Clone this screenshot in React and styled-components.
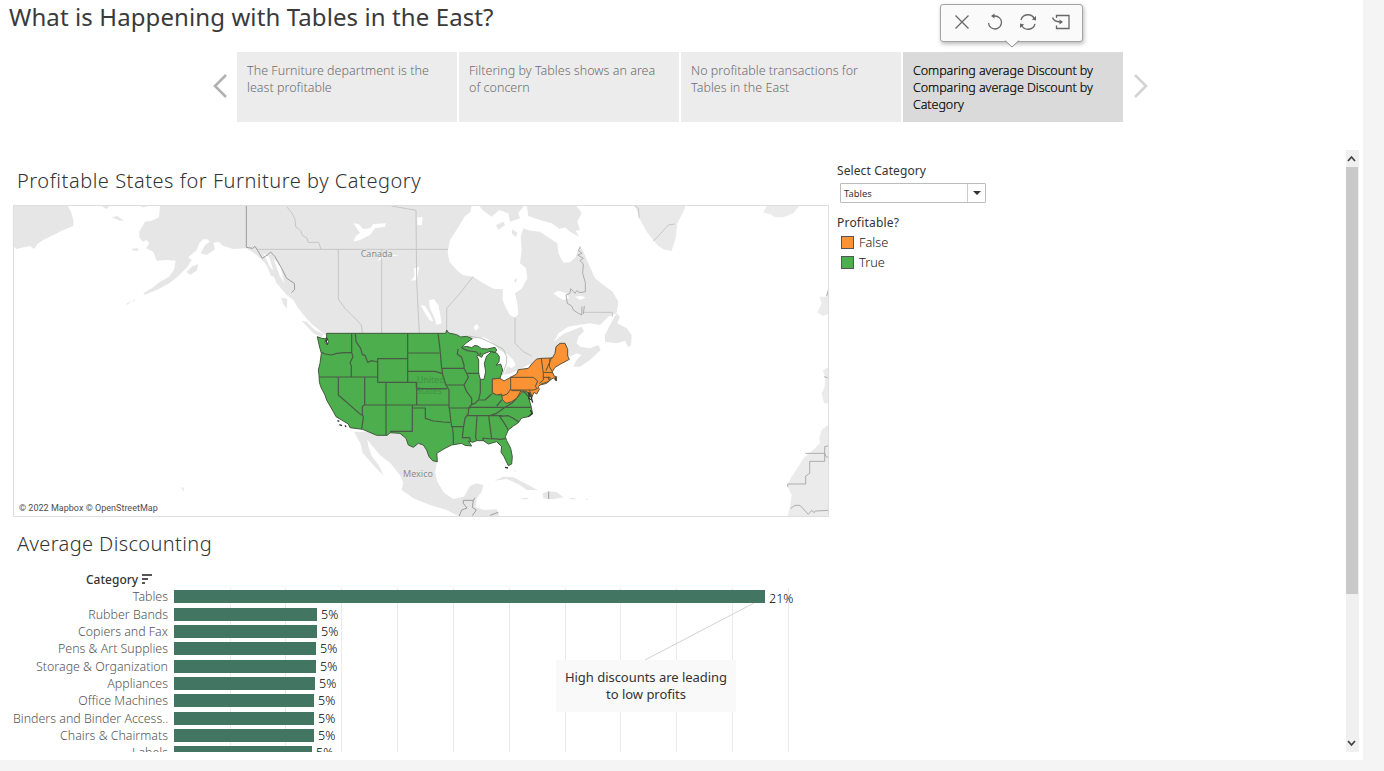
import React from 'react';
import styled, { createGlobalStyle } from 'styled-components';

const Global = createGlobalStyle`
  *, *::before, *::after { box-sizing: border-box; }
  body { margin: 0; background: #f4f4f4; font-family: "Noto Sans", "Open Sans", sans-serif; color: #333; overflow: hidden; }
`;

const Page = styled.main`
  width: 1363px; height: 760px; background: #fff;
  display: flex; flex-direction: column;
`;
const StoryTitle = styled.h1`
  margin: 0 0 19px; padding-left: 9px; height: 33px;
  font-size: 24px; font-weight: 400; line-height: 33px; letter-spacing: 0.1px; color: #3a3a3a;
`;
const Navigator = styled.nav`
  display: flex; align-items: center; height: 70px; padding-left: 212px; margin-bottom: 28px;
`;
const NavArrow = styled.button`
  width: 25px; height: 70px; padding: 0 0 2px; border: 0; background: none;
  display: flex; align-items: center;
  svg { display: block; fill: none; stroke: ${p => (p.$faded ? '#d3d3d3' : '#b1b1b1')}; stroke-width: 2.6; }
`;
const Points = styled.div`display: flex; gap: 2px; margin-right: 9px;`;
const Point = styled.div`
  position: relative; width: 220px; height: 70px; padding: 10px;
  background: ${p => (p.$active ? '#dadada' : '#ececec')};
  color: ${p => (p.$active ? '#000' : '#6c6c6c')};
  font-size: 12.5px; font-weight: 300;
  line-height: 17px; letter-spacing: ${p => (p.$active ? -0.06 : 0.02)}px;
  ${p => p.$active && '-webkit-text-stroke: 0.2px #000;'}
`;
const Caption = styled.span`display: block; width: 192px;`;
const Toolbar = styled.div`
  position: absolute; left: 37px; top: -48px; width: 143px; height: 38px;
  border: 1.5px solid #a3a3a3; border-radius: 3px; background: #fafafa;
  box-shadow: 1px 2px 4px rgba(0,0,0,.28);
  display: flex; align-items: center; justify-content: center; gap: 15px; padding-bottom: 3px;
`;
const ToolIcon = styled.svg`
  width: 18px; height: 18px; fill: none; stroke: #686868; stroke-width: 1.3; overflow: visible;
  .head { fill: #686868; stroke: none; }
`;
const Pointer = styled.svg`position: absolute; left: 63px; top: 34px; overflow: visible;`;

const Viewport = styled.div`
  display: flex; height: 602px; overflow: hidden; padding-left: 13px;
`;
const Sheets = styled.section`width: 824px; flex: none;`;
const SheetTitle = styled.h2`
  margin: 0; padding: ${p => p.$top}px 0 0 4px; height: ${p => p.$height}px;
  font-size: 20px; line-height: 27px; font-weight: 300; letter-spacing: ${p => p.$tracking}px; color: #333;
`;
const MapFrame = styled.div`
  position: relative; width: 816px; height: 312px; border: 1px solid #dedede; overflow: hidden; background: #fff;
  svg { display: block; margin: -1px; }
`;
const Credit = styled.div`
  position: absolute; left: 5px; bottom: 2px; font: 9px/12px Roboto, sans-serif; color: #4d4d4d; letter-spacing: 0.02px;
`;

const Chart = styled.div`position: relative; width: 816px;`;
const ChartHead = styled.div`
  display: flex; align-items: flex-start; gap: 4px; height: 17px; padding: 1px 0 0 73px;
  font-size: 12px; line-height: 16px; font-weight: 500; color: #333;
  svg { margin-top: -1px; }
`;
const Plot = styled.div`display: grid; grid-template-columns: 155px 6px 1fr; height: 182px;`;
const Gridlines = styled.div`
  grid-area: 1 / 3; display: grid; grid-template-columns: repeat(11, 55.83px); padding-left: 0.8px;
`;
const Gridline = styled.i`border-right: 1px solid #ebebeb;`;
const Rows = styled.div`grid-area: 1 / 1 / 2 / 4; display: flex; flex-direction: column; padding-top: 0.2px;`;
const BarRow = styled.div`
  height: 17.33px; flex: none; display: grid; grid-template-columns: 155px 1fr; column-gap: 6px; align-items: center;
`;
const BarLabel = styled.span`
  text-align: right; white-space: nowrap; font-size: 12.4px; line-height: 17px; font-weight: 300; color: #555;
`;
const BarTrack = styled.div`display: flex; align-items: center; gap: 4px; height: 17px;`;
const Bar = styled.div`height: 13px; background: #437563;`;
const Value = styled.span`
  font-size: 12.5px; line-height: 17px; font-weight: 300; color: #000;
  ${p => p.$drop && 'margin-bottom: -3px;'}
`;
const Leader = styled.svg`position: absolute; left: 632px; top: 32px;`;
const Annotation = styled.div`
  position: absolute; left: 543px; top: 89px; width: 180px; height: 52px; padding: 9px 0;
  background: #f9f9f9; text-align: center; font-size: 13px; line-height: 17px; color: #333; letter-spacing: -0.03px;
`;

const Filters = styled.aside`flex: 1; padding-top: 13px;`;
const FilterTitle = styled.div`
  font-size: 12px; line-height: 16px; letter-spacing: ${p => p.$tracking || 0.1}px; color: #333;
`;
const Select = styled.div`
  width: 146px; height: 20px; margin: 4px 0 12px 3px; border: 1px solid #bcbcbc; border-radius: 1px;
  display: flex; align-items: stretch; font-size: 9.4px; line-height: 19px; color: #333;
  span { flex: 1; padding-left: 3px; }
`;
const Chevron = styled.div`
  width: 18px; border-left: 1px solid #ccc; display: grid; place-items: center;
  &::after { content: ''; border: 4px solid transparent; border-top: 4.5px solid #333; border-bottom: 0; }
`;
const LegendItem = styled.div`
  display: flex; align-items: center; gap: 5px; height: 20px; padding-left: 4px;
  font-size: 12.8px; font-weight: 300; color: #222;
`;
const Swatch = styled.i`
  width: 13px; height: 13px; border: 1px solid #555; background: ${p => p.$color};
`;
const LegendList = styled.div`padding-top: 1px;`;

const Scrollbar = styled.div`
  width: 13px; height: 602px; margin-right: 4px; background: #f0f0f0;
  display: flex; flex-direction: column; justify-content: space-between;
`;
const ScrollCap = styled.div`height: 17px; display: grid; place-items: center; margin-right: 2px;`;
const Thumb = styled.div`width: 12px; height: 427px; background: #c9c9c9; margin-bottom: 141px;`;

const Arrow = ({ right }) => (
  <svg width="16" height="26" viewBox="0 0 16 26">
    <path d={right ? 'M3 2L14 13L3 24' : 'M14 2L3 13L14 24'} />
  </svg>
);

const discounts = [
  ['Tables', 591, '21%'], ['Rubber Bands', 143, '5%'], ['Copiers and Fax', 143, '5%'],
  ['Pens & Art Supplies', 142, '5%'], ['Storage & Organization', 142, '5%'], ['Appliances', 141, '5%'],
  ['Office Machines', 140, '5%'], ['Binders and Binder Access..', 140, '5%'],
  ['Chairs & Chairmats', 140, '5%'], ['Labels', 138, '5%'],
];

const LAND = '#e6e6e6';
/* Each group below covers one part of the map, on a grid of three units per pixel. */
const MapArt = () => (
  <svg width="816" height="312" viewBox="39 615 2448 936">
    <g fill={LAND}>
      <g transform="translate(30 600)">
        <path d="M9 15H172L183 35L190 60V78L160 90L130 105L100 120L82 132L72 147L60 138L35 143L20 147L9 138Z" />
        <path d="M450 15L447 52L425 62L405 65L388 95L388 112L398 125L410 120L418 130L408 145L430 155L440 182L470 180L497 182L492 210L475 232L450 245L430 262L400 280L404 284L440 270L480 248L505 228L530 203L545 180L535 172L560 150L568 130L580 118L592 118L600 125L585 135L572 160L590 165L615 148L610 128L625 125L640 138L670 147L710 145L740 165L765 190L785 215L800 250L830 285L850 300L865 325L885 350L905 372L945 405H990V15Z" />
        <path d="M272 17L300 17L290 27ZM305 52L322 48L342 62L330 62ZM380 15H430L400 22ZM365 146L385 145L385 152L370 152ZM530 215L545 200L565 192L560 212L540 225ZM370 300L378 298L368 306ZM348 311L366 303L352 314ZM770 195L785 205L793 230L783 228ZM805 240L820 255L826 275L812 265ZM813 293L832 296L830 327L820 312ZM875 362L890 365L915 390L940 402L935 412L910 400Z" />
      </g>
      <g transform="translate(1290 600)">
        <path d="M-300 15H125L122 35L105 48L85 82L60 120L53 155L58 185L80 210L98 225L130 230L160 250L190 266L218 268L218 300L228 325L240 345L255 353L265 343L262 310L255 280L275 266L292 235L288 205L270 190L275 150L272 110L280 85L300 92L330 95L352 110L382 130L385 160L400 188L420 187L438 170L448 138L460 155L475 190L495 235L520 255L548 275L565 305L560 340L535 350L510 375L480 370L445 375L415 380L385 400L372 425L400 402L430 390L455 380L462 393L445 410L440 430L450 440L480 445L505 435L512 450L480 480L450 500L430 500L440 480L455 465L440 460L400 480L250 520L0 560L-300 450Z" />
        <path d="M560 340L570 350L562 370L590 385L605 405L603 435L595 442L585 422L560 430L525 425L525 405L540 375Z" />
        <path d="M145 15L160 32L185 50L208 30L235 40L240 65L270 55L265 38L285 15ZM290 15L295 48L330 60L365 70L388 87L405 82L420 95L447 110L437 92L450 90L442 65L455 38L437 15ZM198 75L220 65L225 75L205 90ZM247 88L262 98L258 112L245 100ZM252 240l10-5-5 14ZM508 298l25-8 2 8-18 7Z" />
        <path fill="#e9e9e9" d="M615 15L632 62L652 98L685 138L700 148L725 153L738 110L742 70L765 25V15Z" />
      </g>
      <g transform="translate(1020 1290)">
        <path d="M65 5L90 40L120 75L150 98L180 135L190 158L185 180L220 205L270 225L320 240L362 262H480L470 238L430 240L407 230L410 205L425 185L430 165L410 160L390 168L372 200L340 207L312 188L292 155L285 125L292 95L300 10Z" />
        <path d="M42 5L62 42L68 68L95 100L130 137L118 108L95 78L85 48L78 5ZM463 152L490 140L520 142L555 160L593 180L560 180L540 165L500 147ZM608 190L625 184L650 186L670 202L640 208L610 205ZM690 204h16v4h-16ZM543 204l22 0v4h-18ZM737 206h6v3h-6ZM520 118l12 8-10-3Z" />
      </g>
      <g transform="translate(2100 600)" fill="#ebebeb">
        <path d="M200 17L190 38L210 42L225 52L250 52L280 40L300 15ZM387 268L378 290L358 290L365 310L352 338L370 348L387 340ZM387 500L368 512L376 530L374 560L365 580L372 610H387ZM387 672L365 690L358 715L360 728L345 745L310 775L295 800L272 835L262 858L275 885L270 920L262 951H387Z" />
      </g>
      <path d="M545 1460l5 3 3 12-8-8Z" />
    </g>

    <g transform="translate(690 600)" fill="#fff">
      <path d="M370 70L385 72L400 87L420 85L430 72L468 70L465 80L435 85L420 105L390 120L370 125L378 108L390 98ZM562 52L578 52L575 75L562 75ZM440 185L455 168L470 162L458 175ZM552 205L568 200L560 240L543 242L553 228ZM572 315L585 318L600 342L610 365L598 360L585 340ZM597 300L612 298L625 315L632 350L635 370L620 375L612 350L600 325ZM480 163l28 4-25 2Z" />
      <path d="M970 280L985 272L1010 280L1018 295L1000 300L985 292ZM1035 290L1055 287L1067 293L1050 300ZM731 380l10-8 6 12-12 8ZM100 160L117 170L130 210L122 205ZM130 175L152 200L163 250L148 225Z" />
    </g>

    <g fill="none" stroke="#c0c0c0" strokeWidth="2.600">
      <g transform="translate(690 600)">
        <path d="M82 148H654M170 20L185 38L195 58L197 80L212 92L218 107L232 115L234 127H266L273 148M325 148V297L345 325L362 342L385 365L394 375L397 400M455 148V400M485 18L558 31L560 245L568 400M650 390V325L690 280L729 230" />
        <path stroke="#909090" d="M49 15V142L68 145L75 139L82 150L97 175L112 165L122 156L135 170L155 205L170 235L193 250L194 268L185 278" />
      </g>
      <g transform="translate(1290 600)">
        <path d="M255 352V430L280 455L305 468M460 337H547V350M670 124L715 75L735 72" />
        <path stroke="#a2a2a2" d="M452 140L445 152L456 160L443 165L460 175L450 182L460 192L458 220L466 248V275L450 278L440 272L435 280L422 266L420 280L408 285L412 310L425 318L430 330L445 340L455 345L456 320M460 342L463 318" />
        <path d="M613 17L625 25L628 55" />
      </g>
      <g transform="translate(2100 600)" stroke="#a2a2a2">
        <path d="M316 760H374V740L387 737M374 760L378 770L387 773M374 760V784H329V820L317 828V852H263V860M272 925L285 916H300L325 943L335 931L343 938L346 933L387 931M372 530L382 533M385 270L380 288" />
      </g>
      <g transform="translate(1020 1290)" stroke="#929292">
        <path d="M358 258L365 240L381 234L370 220V211H400L405 203M400 211L397 232L409 240L397 257M450 256L475 247M626 185V207" />
      </g>
    </g>

    <g transform="translate(900 960)">
      <path fill="#fff" d="M480 82L498 66L515 56L555 52L585 75L600 92L622 103L640 120L647 135L635 145L622 138L608 172L655 150L690 132L697 140L660 160L625 190L598 178L560 185L535 182L530 160L540 100Z" />
      <g fill="#4dae4d" stroke="#42583d" strokeWidth="3" strokeLinejoin="round">
        <path d="M52 50L65 55L78 57L75 68L82 75L86 64L80 54V40H437L440 30L446 39L470 44L482 51L500 49L517 56L500 68L485 82L500 79L515 83L525 76L533 78L545 86L562 87L585 82L590 90L585 98L570 94L550 102L545 112L538 108L543 99L530 108L536 120V160L541 178L552 178L557 155L553 130L560 108L575 95L590 99L598 110L597 125L588 136L602 132L608 150L600 175L577 177V220L600 225L632 210L650 210L685 213L688 240L694 262L697 278L685 290L665 294L655 308L640 318L625 330L616 350L620 362L632 385L637 410L635 432L625 437L612 410L603 396L605 380L590 365L565 372L550 362H530L518 367L505 363L515 378L495 376L485 370L455 375L435 385L410 400L412 425L398 422L387 410L380 390L370 375L355 370L340 382L325 375L318 355L300 340L270 338L262 346H230L188 328L150 323L145 312L125 300L108 290L100 275L80 240L75 225L62 200L58 185L57 165L55 150L60 130L64 100L58 78Z" />
      </g>
      <g fill="#fb9233" stroke="#59543a" strokeWidth="3" strokeLinejoin="round">
        <path d="M577 177L600 175L612 183L632 172L650 162L655 149L685 145L697 130L710 117L725 115L757 114L765 100L768 80L780 70L795 70L803 88V108L808 118L795 125L780 133L765 142L757 155L762 168L770 170L769 182L760 174L750 180L740 190L720 195L715 200L718 208L710 222L702 217L696 230L687 218L670 212L650 235L635 245L618 250L607 238L605 222L590 225L577 218Z" />
        <path fill="none" d="M632 170V210M632 172H700L713 183L706 200L712 206L700 210H632M632 207L622 222L605 228M635 212H663L650 235M724 115L730 160V180L718 190M730 157L757 158M738 152L755 112M750 115L748 140L757 155M730 172H750V182M745 170L747 181M688 210L697 232" />
        <path fill="none" d="M722 193L740 186L748 185" />
      </g>
      <g fill="none" stroke="#4a5a46" strokeWidth="3.600" strokeLinejoin="round">
        <path d="M155 40V98L132 98L110 100L95 105L75 102L64 97M155 98L159 110L150 128L154 138V170M57 171H233M166 40L168 65L182 85L187 104L195 106L203 127L215 122L233 126V187H349V205M233 187V116H323M323 40V187M323 99H418M323 154H405L426 160M414 40L418 70L421 99L425 145H492M426 145L428 165L438 195L447 210V264M115 171V225L185 286M194 171V254L187 260V282L190 292L185 328M194 255H447M258 187V346M350 187V255M350 206H440M337 255V334H270M337 264H376V295L400 303L430 306L450 307M447 264H512M448 264L453 307L455 320H492M457 320L460 345V372M492 145L500 160L505 172L492 195H438M474 87L472 102L485 112L492 135L492 145M502 160H538M492 195L500 215L515 235V253L506 264L505 280L495 295L490 325L487 353H509L512 366M515 253L525 250L535 240L555 240L575 222M541 178V218L536 238M510 262H694M503 287H605M531 287L527 352L530 362M566 287L574 350L575 357L548 354L551 362M574 355L600 358L616 356M615 262L590 280L570 287M597 287L610 305L625 330M597 289L625 287L640 295L657 307M605 240L590 258M650 235L635 250L615 262M485 84L502 92L530 96L538 108M663 212L675 218L684 229" />
        <path stroke="#31392f" strokeWidth="4" d="M77 53L82 58L78 64L82 72M684 217L694 232L698 248M689 218L686 235L695 240M691 270L697 281L685 290M112 302l6 2M118 314l8 3M135 316l3 5M615 442l9 2M765 172l4 10" />
      </g>
      <path fill="none" stroke="#b4b4b4" strokeWidth="2.500" d="M505 48L545 55L580 72L610 88L620 110V128L607 165" />
    </g>
    <g fontFamily="Noto Sans, sans-serif" fontSize="27">
      <g fill="#8b8b8b" stroke="#eaeaea" strokeWidth="4" paintOrder="stroke">
        <text x="1082" y="771">Canada</text>
        <text x="1209" y="1430">Mexico</text>
      </g>
      <g fill="#3d8b3f" opacity=".75"><text x="1250" y="1148">United</text><text x="1248" y="1181">States</text></g>
      <path stroke="#4a5a46" strokeWidth="3.600" fill="none" d="M1250 1166H1340" />
    </g>
  </svg>
);

export default function App() {
  return (
    <>
      <Global />
      <Page>
        <StoryTitle>What is Happening with Tables in the East?</StoryTitle>
        <Navigator>
          <NavArrow><Arrow /></NavArrow>
          <Points>
            <Point><Caption>The Furniture department is the least profitable</Caption></Point>
            <Point><Caption>Filtering by Tables shows an area of concern</Caption></Point>
            <Point><Caption>No profitable transactions for Tables in the East</Caption></Point>
            <Point $active>
              <Caption>Comparing average Discount by Comparing average Discount by Category</Caption>
              <Toolbar>
                <ToolIcon viewBox="0 0 18 18"><path d="M2.500 2.500L15.500 15.500M15.500 2.500L2.500 15.500" /></ToolIcon>
                <ToolIcon viewBox="0 0 18 18"><path d="M7 3H9A6.500 6.500 0 1 1 2.500 10" /><path className="head" d="M5 3L8.500 0.500V5.500Z" /></ToolIcon>
                <ToolIcon viewBox="0 0 18 18">
                  <path d="M2 7A7.200 7.200 0 0 1 15.500 6M16 11A7.200 7.200 0 0 1 2.500 12" />
                  <path className="head" d="M17 3V7.500L12.800 6.500ZM1 15V10.500L5.200 11.500Z" />
                </ToolIcon>
                <ToolIcon viewBox="0 0 18 18">
                  <path d="M4.500 5V2.500H17V15.500H4.500V12.500M.5 4.500C1.500 8 4 9 10 9" /><path className="head" d="M11 9L7.500 6.500V11.500Z" />
                </ToolIcon>
                <Pointer width="16" height="8"><path d="M1 1H15L8 8Z" fill="#fafafa" /><path d="M1 1.600L8 8L15 1.600" fill="none" stroke="#8c8c8c" /></Pointer>
              </Toolbar>
            </Point>
          </Points>
          <NavArrow $faded><Arrow right /></NavArrow>
        </Navigator>
        <Viewport>
          <Sheets>
            <SheetTitle $top={17} $height={55} $tracking={0.53}>Profitable States for Furniture by Category</SheetTitle>
            <MapFrame>
              <MapArt />
              <Credit>© 2022 Mapbox © OpenStreetMap</Credit>
            </MapFrame>
            <SheetTitle $top={13} $height={54} $tracking={0.38}>Average Discounting</SheetTitle>
            <Chart>
              <ChartHead>
                Category
                <svg width="11" height="14" viewBox="0 0 11 14"><path d="M0 4H10M0 8H6M0 12H3" stroke="#555" strokeWidth="2" /></svg>
              </ChartHead>
              <Plot>
                <Gridlines>{discounts.concat([0]).map((_, i) => <Gridline key={i} />)}</Gridlines>
                <Rows>
                  {discounts.map(([name, width, value], i) => (
                    <BarRow key={name}>
                      <BarLabel>{name}</BarLabel>
                      <BarTrack><Bar style={{ width }} /><Value $drop={i === 0}>{value}</Value></BarTrack>
                    </BarRow>
                  ))}
                </Rows>
              </Plot>
              <Leader width="110" height="57"><path d="M0 57L109 0" stroke="#d2d2d2" /></Leader>
              <Annotation>High discounts are leading<br />to low profits</Annotation>
            </Chart>
          </Sheets>
          <Filters>
            <FilterTitle>Select Category</FilterTitle>
            <Select><span>Tables</span><Chevron /></Select>
            <FilterTitle $tracking={0.2}>Profitable?</FilterTitle>
            <LegendList>
              <LegendItem><Swatch $color="#fb9233" />False</LegendItem>
              <LegendItem><Swatch $color="#4dae4d" />True</LegendItem>
            </LegendList>
          </Filters>
          <Scrollbar>
            <ScrollCap><svg width="9" height="7"><path d="M1 6L4.500 2L8 6" fill="none" stroke="#444" strokeWidth="1.800" /></svg></ScrollCap>
            <Thumb />
            <ScrollCap><svg width="9" height="7"><path d="M1 1L4.500 5L8 1" fill="none" stroke="#444" strokeWidth="1.800" /></svg></ScrollCap>
          </Scrollbar>
        </Viewport>
      </Page>
    </>
  );
}
